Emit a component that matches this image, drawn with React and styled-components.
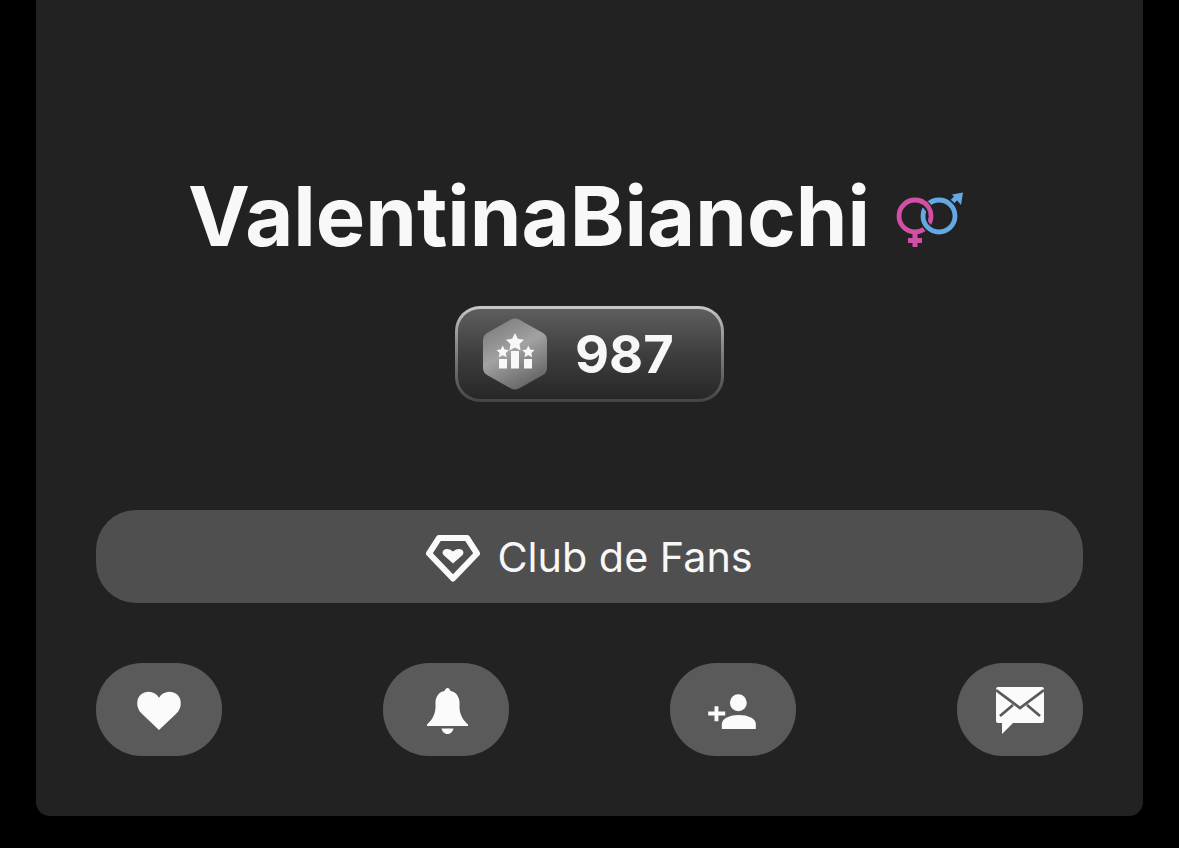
import React from "react";
import styled, { createGlobalStyle } from "styled-components";

const Global = createGlobalStyle`
  html, body { margin: 0; padding: 0; background: #000; }
  body { font-family: Inter, "Liberation Sans", sans-serif; color: #f7f7f7; }
`;

const Page = styled.div`
  width: 1179px;
  height: 848px;
  padding: 0 36px;
  box-sizing: border-box;
  overflow: hidden;
`;

const Card = styled.main`
  height: 816px;
  box-sizing: border-box;
  background: #222222;
  border-radius: 0 0 14px 14px;
  padding: 170px 60px 60px;
  display: flex;
  flex-direction: column;
  align-items: center;
`;

const NameRow = styled.div`
  display: flex;
  align-items: center;
  gap: 25px;
  height: 92px;
  padding-right: 26px;
`;

const Name = styled.h1`
  margin: 0;
  font-size: 83px;
  line-height: 92px;
  font-weight: 700;
  letter-spacing: 0;
  color: #f8f8f8;
`;

const GenderMark = styled.svg`
  margin-top: 8px;
  flex: none;
`;

const Badge = styled.div`
  margin-top: 44px;
  width: 269px;
  height: 96px;
  box-sizing: border-box;
  border: 3px solid transparent;
  border-radius: 25px;
  background:
    linear-gradient(180deg, #5e5e5e 0%, #3e3e3e 50%, #272727 100%) padding-box,
    linear-gradient(180deg, #c8c8c8 0%, #8a8a8a 40%, #444444 100%) border-box;
  display: flex;
  align-items: center;
  padding-left: 25px;
  gap: 28px;
`;

const Score = styled.span`
  font-size: 52.500px;
  line-height: 1;
  font-weight: 700;
  color: #f7f7f7;
`;

const FanButton = styled.button`
  margin-top: 108px;
  width: 100%;
  height: 93px;
  flex: none;
  border: 0;
  border-radius: 40px;
  background: #4f4f4f;
  color: #f7f7f7;
  font-family: inherit;
  font-size: 41.300px;
  font-weight: 400;
  display: flex;
  align-items: center;
  justify-content: center;
  gap: 17px;
`;

const Actions = styled.div`
  margin-top: 60px;
  width: 100%;
  display: flex;
  justify-content: space-between;
`;

const ActionButton = styled.button`
  width: 126px;
  height: 93px;
  border: 0;
  padding: 3px ${(p) => p.$nudgeLeft || 0}px 0 ${(p) => p.$nudge || 0}px;
  border-radius: 46px;
  background: #5a5a5a;
  color: #fbfbfb;
  display: flex;
  align-items: center;
  justify-content: center;
`;

const Gender = () => (
  <GenderMark width="70" height="60" viewBox="16 20 70 60" fill="none" aria-hidden="true">
    <circle cx="36" cy="46" r="16" stroke="#d34fa6" strokeWidth="4.800" />
    <path d="M36 62V77M29 70.500H43" stroke="#d34fa6" strokeWidth="5" />
    <path d="M71 34L79 26" stroke="#64a9e4" strokeWidth="4.800" />
    <path d="M73 24.500L84 22.500L82 35Z" fill="#64a9e4" />
    <circle cx="60" cy="46" r="16" stroke="#222222" strokeWidth="8" />
    <circle cx="60" cy="46" r="16" stroke="#64a9e4" strokeWidth="4.800" />
    <path d="M44 33A16 16 0 0 1 52 46" stroke="#222222" strokeWidth="8" />
    <path d="M42 31A16 16 0 0 1 52 46" stroke="#d34fa6" strokeWidth="4.800" />
  </GenderMark>
);

const Hexagon = () => (
  <svg width="64" height="72" viewBox="0 0 64 72" aria-hidden="true">
    <defs>
      <linearGradient id="hex" x1="0.1" y1="0" x2="0.6" y2="1">
        <stop offset="0" stopColor="#787878" />
        <stop offset="0.5" stopColor="#a2a2a2" />
        <stop offset="1" stopColor="#666666" />
      </linearGradient>
    </defs>
    <path
      d="M28 1.500Q32 -0.500 36 1.500L60 15Q64 17.500 64 22V50Q64 54.500 60 57L36 70.500Q32 72.500 28 70.500L4 57Q0 54.500 0 50V22Q0 17.500 4 15Z"
      fill="url(#hex)"
    />
    <g fill="#f8f8f8">
      <path d="M32 15l2.800 5.800 6.300.9-4.600 4.400 1.100 6.300-5.600-3-5.600 3 1.100-6.300-4.600-4.400 6.300-.9z" />
      <path d="M19.700 27.500l1.900 3.900 4.300.6-3.100 3 .7 4.300-3.800-2-3.800 2 .7-4.300-3.100-3 4.300-.6z" />
      <path d="M45.300 27.500l1.900 3.900 4.300.6-3.100 3 .7 4.300-3.800-2-3.800 2 .7-4.300-3.100-3 4.300-.6z" />
      <rect x="16" y="41" width="8" height="9.500" />
      <rect x="28" y="33" width="8" height="17.500" />
      <rect x="41" y="41" width="8" height="9.500" />
    </g>
  </svg>
);

const Diamond = () => (
  <svg width="54" height="53" viewBox="0 -4.500 54 53" fill="none" aria-hidden="true">
    <path d="M13 3.500H41L51 19L27 44L3 19Z" stroke="#fafafa" strokeWidth="6" strokeLinejoin="round" />
    <path d="M27 29L17.500 20.500Q15.500 18 17.800 15.500Q22 13 27 17Q32 13 36.200 15.500Q38.500 18 36.500 20.500Z" fill="#fafafa" />
  </svg>
);

const Heart = () => (
  <svg width="46" height="40" viewBox="0 0 48 42" fill="currentColor" aria-hidden="true">
    <path d="M24 41L6 24C-1 17 0 7 6 3C12 -1 20 0.500 24 7C28 0.500 36 -1 42 3C48 7 49 17 42 24Z" />
  </svg>
);

const Bell = () => (
  <svg width="41" height="46" viewBox="0 0 41 46" fill="currentColor" aria-hidden="true">
    <path d="M20.500 0C22 0 23 1.500 23.500 3C29 4 32 8 32.500 14V20C33 27 36 32 41 36.500V38H0V36.500C5 32 8 27 8.500 20V14C9 8 12 4 17.500 3C18 1.500 19 0 20.500 0Z" />
    <path d="M14.500 40.500H26.500C25.500 44.500 23 46 20.500 46C18 46 15.500 44.500 14.500 40.500Z" />
  </svg>
);

const AddUser = () => (
  <svg width="49" height="35" viewBox="0 0 50 36" fill="currentColor" aria-hidden="true">
    <circle cx="31" cy="9" r="8.700" />
    <path d="M14 36V31C14 25 22 21.500 31.500 21.500C41 21.500 49 25 49 31V36Z" />
    <path d="M6.500 12.500H10.500V18H17.500V22H10.500V28H6.500V22H0V18H6.500Z" />
  </svg>
);

const Mail = () => (
  <svg width="48" height="48" viewBox="0 0 48 48" aria-hidden="true">
    <path fill="currentColor" d="M2 0H46Q48 0 48 2V34Q48 36 46 36H17L6 47V36H2Q0 36 0 34V2Q0 0 2 0Z" />
    <path fill="none" stroke="#5a5a5a" strokeWidth="2.800" d="M0 3L24 21L48 3M4 29L17 18M44 29L31 18" />
  </svg>
);

export default function App() {
  return (
    <Page>
      <Global />
      <Card>
        <NameRow>
          <Name>ValentinaBianchi</Name>
          <Gender />
        </NameRow>
        <Badge>
          <Hexagon />
          <Score>987</Score>
        </Badge>
        <FanButton>
          <Diamond />
          Club de Fans
        </FanButton>
        <Actions>
          <ActionButton aria-label="Favorito"><Heart /></ActionButton>
          <ActionButton aria-label="Notificaciones" $nudge={3}><Bell /></ActionButton>
          <ActionButton aria-label="Seguir" $nudgeLeft={2}><AddUser /></ActionButton>
          <ActionButton aria-label="Mensaje"><Mail /></ActionButton>
        </Actions>
      </Card>
    </Page>
  );
}
